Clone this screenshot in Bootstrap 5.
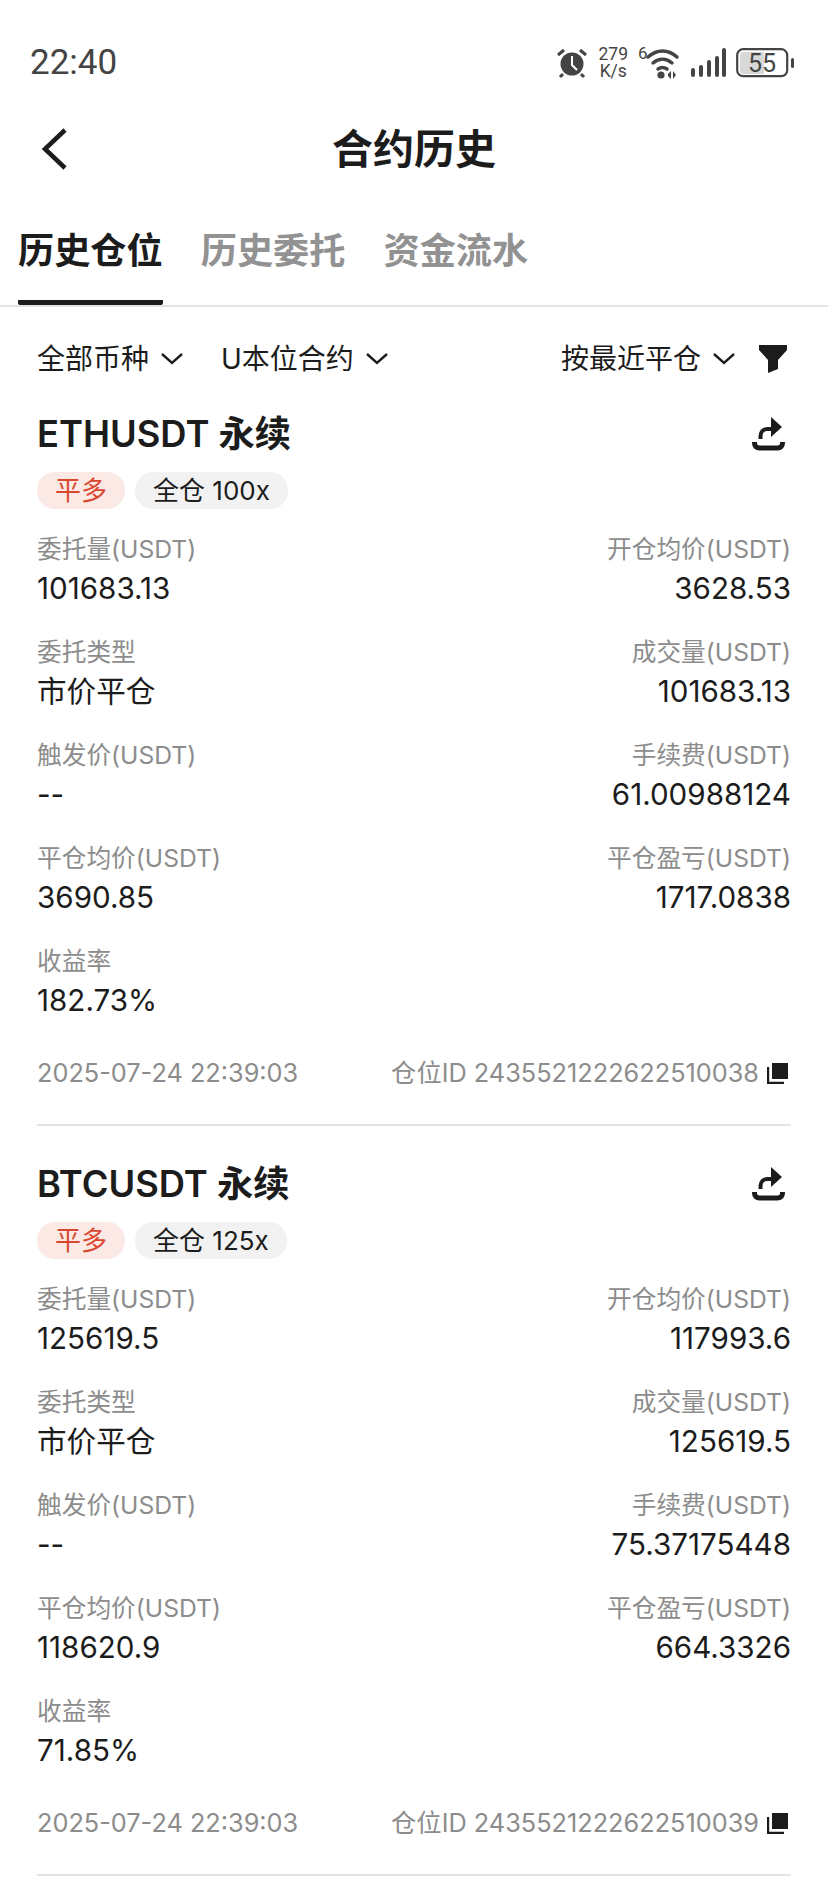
<!DOCTYPE html>
<html lang="zh-CN">
<head>
  <meta charset="UTF-8">
  <meta name="viewport" content="width=device-width, initial-scale=1.0">
  <title>合约历史</title>
  <link href="https://cdn.jsdelivr.net/npm/bootstrap@5.3.0/dist/css/bootstrap.min.css" rel="stylesheet">
  <style>
    body { font-family: Inter, "Noto Sans CJK SC", sans-serif; color: #1c1c1c; background: #fff; width: 828px; height: 1878px; overflow: hidden; }
    .status-bar { height: 100px; padding: 25px 32px 0 30px; color: #444; }
    .status-time { font-family: Roboto, sans-serif; font-size: 35px; line-height: 76px; }
    .status-speed { font-family: Roboto, sans-serif; font-size: 17.5px; line-height: 17px; text-align: center; }
    .status-icons { height: 76px; gap: 10px; }
    .top-bar { height: 100px; }
    .top-title { font-size: 41px; line-height: 99px; font-weight: 700; }
    .back-btn { left: 40px; top: 28px; }
    .tab-row { height: 107px; padding-left: 18px; gap: 38px; border-bottom: 2px solid #e4e4e4; }
    .tab-item { font-size: 36.2px; font-weight: 700; line-height: 103px; color: #929292; height: 105px; }
    .tab-item.on { color: #1c1c1c; border-bottom: 5px solid #1c1c1c; border-radius: 0 0 2px 2px; }
    .filter-row { height: 102px; padding: 2px 41px 0 37px; font-size: 28px; }
    .filter-row svg.chev { margin-left: 12px; }
    .filter-gap { margin-left: 38px; }
    .pos-block { padding: 0 37px; }
    .pos-title { font-size: 36.3px; font-weight: 600; line-height: 50px; height: 50px; }
    .pos-share { margin-right: 5px; }
    .tag-sell, .tag-mode { font-size: 26px; line-height: 37px; height: 37px; border-radius: 18px; padding: 0 18px; }
    .tag-sell { background: #fbe9e6; color: #d9472f; }
    .tag-mode { background: #f2f2f2; }
    .tag-row { margin: 13px 0 21px; gap: 10px; }
    .cell-row { height: 103px; }
    .cell-label { font-size: 24.7px; line-height: 38px; color: #8c8c8c; }
    .cell-value { font-size: 29.6px; line-height: 40px; }
    .pos-foot { height: 79px; padding-top: 8px; font-size: 25.3px; line-height: 40px; color: #8c8c8c; }
    .foot-copy { margin-left: 8px; margin-right: 3px; }
    .pos-line { height: 2px; background: #e4e4e4; margin-bottom: 33px; }
  </style>
</head>
<body>
  <div class="status-bar d-flex justify-content-between">
    <div class="status-time">22:40</div>
    <div class="status-icons d-flex align-items-center">
      <!-- alarm -->
      <svg width="32" height="32" viewBox="0 0 32 32">
        <circle cx="16" cy="17" r="11.5" fill="#444"/>
        <path d="M16 9v9l5 5" fill="none" stroke="#fff" stroke-width="2"/>
        <path d="M2 8l6-5M30 8l-6-5M7 27l-3 3M25 27l3 3" stroke="#444" stroke-width="3" fill="none"/>
      </svg>
      <div class="status-speed">279<br>K/s</div>
      <!-- wifi -->
      <svg width="42" height="42" viewBox="0 -4 42 42">
        <text x="0" y="13" font-size="17" font-family="Roboto, sans-serif" fill="#444">6</text>
        <path d="M10 11c9-8 20-8 29 0M15 17c6-5 13-5 19 0M20 23c3-2 6-2 9 0" fill="none" stroke="#444" stroke-width="3.4" stroke-linecap="round"/>
        <circle cx="23" cy="29" r="3.6" fill="#444"/>
        <path d="M30 28l3-3v8l-3-3zM35 25l3 4-3 4z" fill="#444"/>
      </svg>
      <!-- signal -->
      <svg width="36" height="30" viewBox="0 0 36 30">
        <g stroke="#444" stroke-width="4" stroke-linecap="round">
          <path d="M3 22v5M11 19v8M19 14v13M27 10v17M34 2v25"/>
        </g>
      </svg>
      <!-- battery -->
      <svg width="60" height="30" viewBox="0 0 60 30">
        <rect x="1.2" y="1.2" width="50" height="27" rx="6" fill="#fff" stroke="#444" stroke-width="2.2"/>
        <path d="M4 7a3 3 0 0 1 3-3h21v22H7a3 3 0 0 1-3-3z" fill="#d8d8d8"/>
        <text x="26" y="24" text-anchor="middle" font-size="25" font-family="Roboto, sans-serif" fill="#444">55</text>
        <rect x="55" y="10" width="3" height="10" rx="1.5" fill="#444"/>
      </svg>
    </div>
  </div>

  <div class="top-bar position-relative text-center">
    <svg class="back-btn position-absolute" width="30" height="42" viewBox="0 0 30 42">
      <path d="M25 2L5 21l20 19" fill="none" stroke="#1c1c1c" stroke-width="4.5"/>
    </svg>
    <div class="top-title">合约历史</div>
  </div>

  <div class="tab-row d-flex">
    <div class="tab-item on">历史仓位</div>
    <div class="tab-item">历史委托</div>
    <div class="tab-item">资金流水</div>
  </div>

  <div class="filter-row d-flex align-items-center">
    <span>全部币种</span>
    <svg class="chev" width="22" height="12" viewBox="0 0 22 12"><path d="M1 1l10 9 10-9" fill="none" stroke="#1c1c1c" stroke-width="2.4"/></svg>
    <span class="filter-gap">U本位合约</span>
    <svg class="chev" width="22" height="12" viewBox="0 0 22 12"><path d="M1 1l10 9 10-9" fill="none" stroke="#1c1c1c" stroke-width="2.4"/></svg>
    <span class="ms-auto">按最近平仓</span>
    <svg class="chev" width="22" height="12" viewBox="0 0 22 12"><path d="M1 1l10 9 10-9" fill="none" stroke="#1c1c1c" stroke-width="2.4"/></svg>
    <svg class="ms-4" width="28" height="28" viewBox="0 0 28 28"><path d="M0 0h28v5l-9 10v9l-10 4V15L0 5z" fill="#1c1c1c"/></svg>
  </div>

  <div id="positions"></div>

  <script>
    const positions = [
      { name: 'ETHUSDT 永续', lev: '100x', qty: '101683.13', open: '3628.53', deal: '101683.13', fee: '61.00988124', close: '3690.85', pnl: '1717.0838', rate: '182.73%', id: '2435521222622510038' },
      { name: 'BTCUSDT 永续', lev: '125x', qty: '125619.5', open: '117993.6', deal: '125619.5', fee: '75.37175448', close: '118620.9', pnl: '664.3326', rate: '71.85%', id: '2435521222622510039' }
    ];

    const cell = (label, value, right) => `
      <div class="${right ? 'text-end' : ''}">
        <div class="cell-label">${label}</div>
        <div class="cell-value">${value}</div>
      </div>`;

    document.getElementById('positions').innerHTML = positions.map(p => `
      <div class="pos-block">
        <div class="d-flex justify-content-between align-items-center pos-title">
          <span>${p.name}</span>
          <svg class="pos-share" width="34" height="34" viewBox="0 0 34 34">
            <path d="M8.5 22v-3c0-4 3-7 7-7h5" fill="none" stroke="#1c1c1c" stroke-width="4"/>
            <path d="M19 0l11 10-11 10z" fill="#1c1c1c"/>
            <path d="M2.5 25v1c0 3 2 5 5 5h18c3 0 5-2 5-5v-1" fill="none" stroke="#1c1c1c" stroke-width="5"/>
          </svg>
        </div>
        <div class="d-flex tag-row">
          <span class="tag-sell">平多</span>
          <span class="tag-mode">全仓 ${p.lev}</span>
        </div>
        <div class="cell-row d-flex justify-content-between">${cell('委托量(USDT)', p.qty)}${cell('开仓均价(USDT)', p.open, true)}</div>
        <div class="cell-row d-flex justify-content-between">${cell('委托类型', '市价平仓')}${cell('成交量(USDT)', p.deal, true)}</div>
        <div class="cell-row d-flex justify-content-between">${cell('触发价(USDT)', '--')}${cell('手续费(USDT)', p.fee, true)}</div>
        <div class="cell-row d-flex justify-content-between">${cell('平仓均价(USDT)', p.close)}${cell('平仓盈亏(USDT)', p.pnl, true)}</div>
        <div class="cell-row d-flex justify-content-between">${cell('收益率', p.rate)}</div>
        <div class="pos-foot d-flex justify-content-between align-items-start">
          <span>2025-07-24 22:39:03</span>
          <span class="d-flex align-items-center">仓位ID ${p.id}
            <svg class="foot-copy" width="21" height="21" viewBox="0 0 21 21">
              <rect x="5" y="0" width="16" height="16" fill="#1c1c1c"/>
              <path d="M1 4v16h16" fill="none" stroke="#1c1c1c" stroke-width="2.4"/>
            </svg>
          </span>
        </div>
        <div class="pos-line"></div>
      </div>`).join('');
  </script>
</body>
</html>
